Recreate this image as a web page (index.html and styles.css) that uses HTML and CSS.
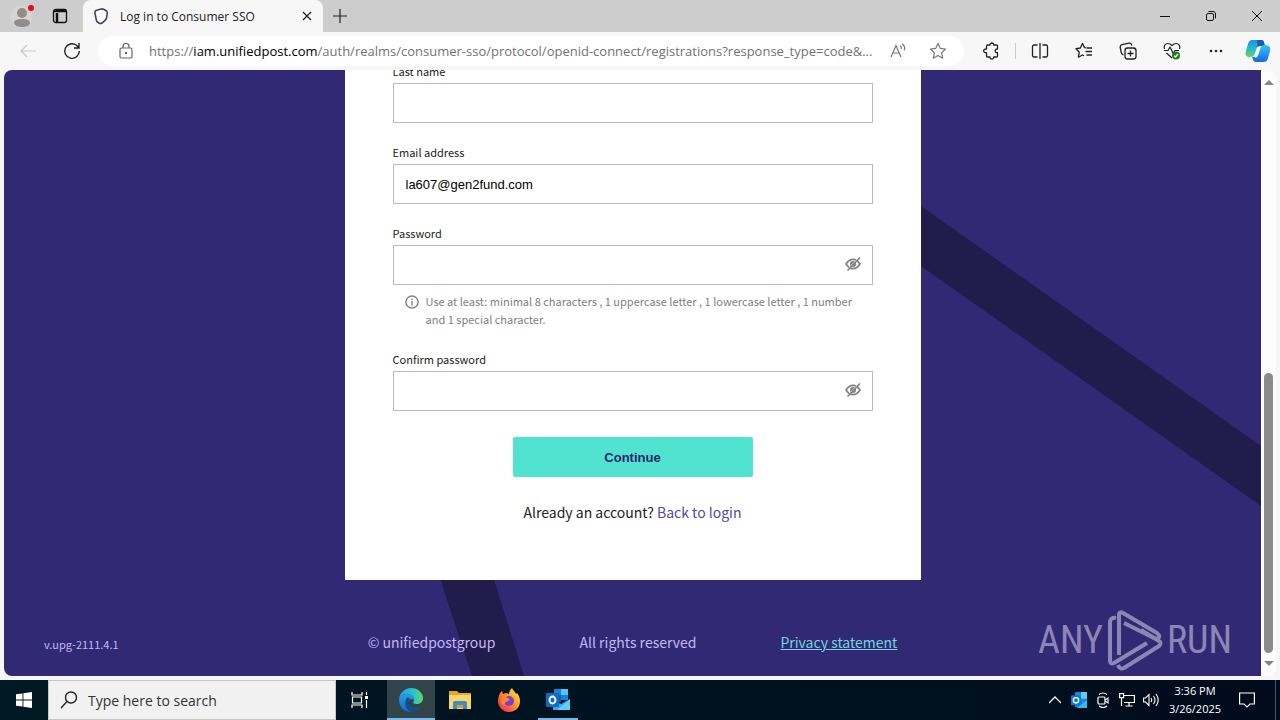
FILE: index.html
```
<!DOCTYPE html>
<html lang="en">
	<head>
		<title>Log in to Consumer SSO</title>
		<meta charset="utf-8" />
		<meta name="viewport" content="width=device-width, initial-scale=1" />
		<link rel="stylesheet" href="styles.css">
	</head>
	<body>
		<header class="tabstrip">
			<button class="profile" aria-label="Profile">
				<svg width="24" height="24" viewBox="0 0 24 24">
					<circle cx="11" cy="13" r="11" fill="#d6d3d1"/>
					<circle cx="12" cy="9" r="5" fill="#918d8b"/>
					<path d="M4 19c0-3 3-4 8-4s8 1 8 4c-1 3-4 4-8 4s-7-1-8-4z" fill="#918d8b"/>
					<circle cx="21" cy="4" r="3" fill="#e00b1c"/>
				</svg>
			</button>
			<button class="tab-actions" aria-label="Tab actions">
				<svg width="16" height="16" viewBox="0 0 16 16" fill="none" stroke="#111" stroke-width="1.3">
					<rect x="1.5" y="1.5" width="13" height="13" rx="2"/>
					<path d="M2 3h12M5 5v9" stroke-width="2.5"/>
				</svg>
			</button>
			<div class="tab">
				<svg width="16" height="18" viewBox="0 0 16 18" fill="#fff" stroke="#443e72" stroke-width="1.6">
					<path d="M3 3.500L8 2c1-.5 2 0 3 .5l2.500 1.500c.5.5.8 1 .7 2L13.500 11c-.2 1-.5 1.500-1.500 2.300L9 16c-1 .6-2 .6-3 0l-1.500-1c-.7-.5-1-1-1.200-2L2 6c-.3-1.200 0-2 1-2.500z"/>
				</svg>
				<span class="tab-title">Log in to Consumer SSO</span>
				<button class="tab-close" aria-label="Close tab">
					<svg width="10" height="10" viewBox="0 0 10 10" stroke="#222" stroke-width="1.3"><path d="M1 1l8 8M9 1l-8 8"/></svg>
				</button>
			</div>
			<button class="new-tab" aria-label="New tab">
				<svg width="14" height="14" viewBox="0 0 14 14" stroke="#222" stroke-width="1.2"><path d="M7 0v14M0 7h14"/></svg>
			</button>
			<div class="window-controls">
				<button aria-label="Minimize"><svg width="10" height="10" viewBox="0 0 10 10" stroke="#111"><path d="M0 5.500h10"/></svg></button>
				<button aria-label="Restore"><svg width="10" height="10" viewBox="0 0 10 10" fill="none" stroke="#111"><rect x=".5" y="2.500" width="7" height="7" rx="1.500"/><path d="M2.500.5H7c1.500 0 2.500 1 2.500 2.500v4.500"/></svg></button>
				<button aria-label="Close"><svg width="10" height="10" viewBox="0 0 10 10" stroke="#111"><path d="M0 0l10 10M10 0L0 10"/></svg></button>
			</div>
		</header>

		<nav class="toolbar">
			<button class="tool" aria-label="Back"><svg width="16" height="14" viewBox="0 0 16 14" fill="none" stroke="#c8c8c8" stroke-width="1.200"><path d="M7 1L1 7l6 6M1 7h15"/></svg></button>
			<button class="tool" aria-label="Refresh"><svg width="18" height="18" viewBox="0 0 18 18" fill="none" stroke="#222" stroke-width="1.400"><path d="M16.300 9A7.300 7.300 0 1 1 13.500 3.300L16 6M16 1v5h-5"/></svg></button>
			<div class="address">
				<svg width="14" height="16" viewBox="0 0 14 16" fill="none" stroke="#666" stroke-width="1.200"><rect x="1" y="5" width="12" height="10" rx="1.500"/><path d="M4 5V3.500a3 3 0 0 1 6 0V5"/><circle cx="7" cy="10" r=".6" fill="#666"/></svg>
				<div class="url" role="textbox" aria-label="Address" contenteditable="true">https://<b>iam.unifiedpost.com</b>/auth/realms/consumer-sso/protocol/openid-connect/registrations?response_type=code&amp;...</div>
				<button class="in-address" aria-label="Read aloud"><svg width="18" height="16" viewBox="0 0 18 16" fill="none" stroke="#777" stroke-width="1.200"><path d="M2 14L7 2.500 12 14M4 10h6M11 2.500c1.200.8 1.600 2 1.200 3.500M13 .8c2.300 1.500 3 4 2.400 6.500"/></svg></button>
				<button class="in-address" aria-label="Add to favorites"><svg width="18" height="18" viewBox="0 0 18 18" fill="none" stroke="#777" stroke-width="1.200" stroke-linejoin="round"><path d="M9 1.500l2.300 4.900 5.200.7-3.800 3.700.9 5.400L9 13.600l-4.600 2.600.9-5.400L1.500 7.100l5.200-.7z"/></svg></button>
			</div>
			<button class="tool" aria-label="Extensions"><svg width="18" height="18" viewBox="0 0 18 18" fill="none" stroke="#222" stroke-width="1.300" stroke-linejoin="round"><path d="M5.500 3H8c-.3-2.700 4-2.700 3.700 0h2.800q1 0 1 1v3c-3-.3-3.300 4 0 3.700V14q0 1-1 1h-2.800c.3 2.700-4 2.700-3.700 0H5.500q-1 0-1-1v-3.300c-3.800.3-3.800-4 0-3.700V4q0-1 1-1z"/></svg></button>
			<span class="separator"></span>
			<button class="tool" aria-label="Split screen"><svg width="18" height="16" viewBox="0 0 18 16" fill="none" stroke="#222" stroke-width="1.300"><path d="M9 0v16M6.500 2H3a1.500 1.500 0 0 0-1.500 1.500v9A1.500 1.500 0 0 0 3 14h3.500M11.500 2H15a1.500 1.500 0 0 1 1.500 1.500v9A1.500 1.500 0 0 1 15 14h-3.500"/></svg></button>
			<button class="tool" aria-label="Favorites"><svg width="18" height="18" viewBox="0 0 18 18" fill="none" stroke="#222" stroke-width="1.300" stroke-linejoin="round"><path d="M11 5.800l-1.400-.2L7.500 1.500 5.400 6 1 6.700l3.300 3.500-.9 5L7.500 13l1.500.8M11.500 6H17M10.500 9.500H17M11.500 13H17"/></svg></button>
			<button class="tool" aria-label="Collections"><svg width="18" height="18" viewBox="0 0 18 18" fill="none" stroke="#222" stroke-width="1.300"><rect x="6" y="6" width="11" height="11" rx="2.500"/><path d="M11.500 8.500v6M8.500 11.500h6M4.500 13C3 12.500 2.500 12 2.200 10.500l-1-5C1 4 1.500 3 3 2.600L10 1.200c1.500-.3 2.500.5 3 2.300"/></svg></button>
			<button class="tool" aria-label="Browser essentials"><svg width="18" height="18" viewBox="0 0 18 18" fill="none" stroke="#222" stroke-width="1.200" stroke-linejoin="round"><path d="M1.500 7C.5 4 2 1.500 5 1.500c2 0 3 1 4 2 1-1 2-2 4-2 3 0 4.500 2.500 3.500 5.500M1 8.500h4L7 5l3 6 2-2.500h4M3.500 11L9 16"/><circle cx="13" cy="13.500" r="4" fill="#16811b" stroke="none"/><path d="M11 13.700l1.500 1.300 2.500-3" stroke="#fff"/></svg></button>
			<button class="tool" aria-label="Settings and more"><svg width="16" height="4" viewBox="0 0 16 4" fill="#222"><circle cx="3" cy="2" r="1.300"/><circle cx="8" cy="2" r="1.300"/><circle cx="13" cy="2" r="1.300"/></svg></button>
			<button class="tool copilot" aria-label="Copilot">
				<svg width="26" height="24" viewBox="0 0 26 24">
					<defs>
						<linearGradient id="cp-left" x2="0" y2="1"><stop offset="0" stop-color="#1b8fe0"/><stop offset=".5" stop-color="#27b8cf"/><stop offset="1" stop-color="#5fd56a"/></linearGradient>
						<linearGradient id="cp-right" x2="0" y2="1"><stop offset="0" stop-color="#35c6f4"/><stop offset="1" stop-color="#1468e8"/></linearGradient>
					</defs>
					<path d="M7 1h9c3 0 3 3 4 6h-5c-2 0-3 1-3.500 3L10 14c-1 3-2 4-5 4-4 0-5-2-4-6l2-7c1-3 2-4 4-4z" fill="url(#cp-left)"/>
					<path d="M12 1h5c2 0 2 3 3 6h-5c-1 0-2 .5-2.500 1.500z" fill="#1360b8"/>
					<path d="M20 6c4 0 6 2 5 6l-2 7c-1 3-2 4-5 4h-7c-3 0-3-3-4-5h3c2 0 3-1 3.500-3l2-6c.5-2 2-3 4.500-3z" fill="url(#cp-right)"/>
					<path d="M12 9h3l-2.500 8c-.3 1-1 1.500-2.500 1.500z" fill="#eaf7ff"/>
				</svg>
			</button>
		</nav>

		<main class="viewport">
			<div class="page">
				<svg class="stripes" viewBox="0 0 1257 606" preserveAspectRatio="none" fill="#211c4c" aria-hidden="true">
					<path d="M900 124L1257 376V436L900 184z"/>
					<path d="M430 490h54l36 116h-52z"/>
				</svg>
				<form class="card">
					<div class="field">
						<label for="last-name">Last name</label>
						<input type="text" id="last-name">
					</div>
					<div class="field">
						<label for="email">Email address</label>
						<input type="text" id="email" value="la607@gen2fund.com">
					</div>
					<div class="field">
						<label for="password">Password</label>
						<div class="secret">
							<input type="password" id="password">
							<button type="button" class="reveal" aria-label="Show password">
								<svg width="18" height="16" viewBox="0 0 18 16" fill="none" stroke="#808080" stroke-width="1.600"><path d="M2 8q3-4.600 7-4.600T16 8q-3 4.600-7 4.600T2 8z"/><circle cx="9" cy="8" r="2.200" fill="#808080"/><path d="M2.500 15L15 2" stroke="#fff" /><path d="M3.500 14.500L16 1.500"/></svg>
							</button>
						</div>
						<div class="hint">
							<svg width="14" height="14" viewBox="0 0 14 14" fill="none" stroke="#888" stroke-width="1.500"><circle cx="7" cy="7" r="6.100"/><path d="M7 6v4.500M7 3.500V5"/></svg>
							<span>Use at least: minimal 8 characters , 1 uppercase letter , 1 lowercase letter , 1 number and 1 special character.</span>
						</div>
					</div>
					<div class="field">
						<label for="confirm">Confirm password</label>
						<div class="secret">
							<input type="password" id="confirm">
							<button type="button" class="reveal" aria-label="Show password">
								<svg width="18" height="16" viewBox="0 0 18 16" fill="none" stroke="#808080" stroke-width="1.600"><path d="M2 8q3-4.600 7-4.600T16 8q-3 4.600-7 4.600T2 8z"/><circle cx="9" cy="8" r="2.200" fill="#808080"/><path d="M2.500 15L15 2" stroke="#fff" /><path d="M3.500 14.500L16 1.500"/></svg>
							</button>
						</div>
					</div>
					<button type="submit" class="continue">Continue</button>
					<p class="account">Already an account? <a href="#login">Back to login</a></p>
				</form>
				<footer class="footer">
					<span>© unifiedpostgroup</span>
					<span>All rights reserved</span>
					<a href="#privacy">Privacy statement</a>
				</footer>
				<span class="version">v.upg-2111.4.1</span>
				<div class="watermark">
					<span>ANY</span>
					<svg width="56" height="62" viewBox="0 0 56 62" fill="none" stroke="currentColor" stroke-width="4" stroke-linejoin="round">
						<path d="M9 9Q3 8 3 14v37q0 5 4 3l33-20"/>
						<path d="M12 46V6q0-4 4-2l34 20q4 3 1 5-2 1-4 0L17 14"/>
						<path d="M11 56q2 5 6 3l35-22q3-3 0-5L34 21"/>
					</svg>
					<span>RUN</span>
				</div>
			</div>
			<div class="scrollbar">
				<svg width="10" height="5" viewBox="0 0 10 5" fill="#858585"><path d="M5 0l5 5H0z"/></svg>
				<div class="track"><div class="thumb"></div></div>
				<svg width="10" height="5" viewBox="0 0 10 5" fill="#858585"><path d="M0 0h10L5 5z"/></svg>
			</div>
		</main>

		<footer class="taskbar">
			<button class="task" aria-label="Start"><svg width="16" height="16" viewBox="0 0 16 16" fill="#fff"><path d="M0 2.300L6.500 1.400v6.200H0zM7.400 1.200L16 0v7.600H7.400zM0 8.400h6.500v6.200L0 13.700zM7.400 8.400H16V16l-8.600-1.200z"/></svg></button>
			<label class="search">
				<svg width="18" height="18" viewBox="0 0 18 18" fill="none" stroke="#222" stroke-width="1.400"><circle cx="11" cy="6.500" r="5.500"/><path d="M7 10.500L1 17"/></svg>
				<input type="text" placeholder="Type here to search" aria-label="Search">
			</label>
			<button class="task" aria-label="Task view"><svg width="18" height="16" viewBox="0 0 18 16" fill="none" stroke="#fff" stroke-width="1.200"><path d="M1 0v3h10V0M1 16v-3h10v3M1.500 5h9v6h-9zM15.500 0v3M15.500 8v8"/><path d="M14 4h3v3h-3z" fill="#fff" stroke="none"/></svg></button>
			<div class="apps">
				<button class="task running active" aria-label="Edge">
					<svg width="24" height="24" viewBox="0 0 24 24">
						<defs>
							<linearGradient id="edge-top"><stop offset="0" stop-color="#2799de"/><stop offset=".6" stop-color="#2bc4cf"/><stop offset="1" stop-color="#65d85c"/></linearGradient>
							<linearGradient id="edge-low" x2="0" y2="1"><stop offset="0" stop-color="#2aa0e4"/><stop offset="1" stop-color="#1368be"/></linearGradient>
						</defs>
						<path d="M0 11C1 4 6 0 12 0c7 0 12 5 12 10 0 4-3 6-6.500 6-3 0-4-1-3-2.500C17 9 12 6 8 6c-4 0-7 2-8 5z" fill="url(#edge-top)"/>
						<path d="M0 12c0-4 4-6 8-6 5 0 8 3 7 6-1-2-6-1-6 3 0 5 6 7 12 4-3 4-6 5-9 5C5 24 0 19 0 12z" fill="url(#edge-low)"/>
						<path d="M9 9c-4 3-4 12 3 15 4 0 7-2 9-5-6 3-12 1-12-4 0-2 1-3 2-4z" fill="#104e93"/>
					</svg>
				</button>
				<button class="task" aria-label="File Explorer">
					<svg width="22" height="20" viewBox="0 0 22 20"><path d="M0 1h8l2 2h12v15H0z" fill="#e8a52c"/><path d="M0 5h22v14H0z" fill="#fbd569"/><path d="M4 19v-6q0-2 2-2h10q2 0 2 2v6h-4v-4H8v4z" fill="#3e8ec4"/><path d="M8 15h6v3H8z" fill="#d89c33"/></svg>
				</button>
				<button class="task" aria-label="Firefox">
					<svg width="24" height="24" viewBox="0 0 24 24">
						<defs><linearGradient id="fox" x1="1" x2="0" y2="1"><stop offset="0" stop-color="#fff34a"/><stop offset=".45" stop-color="#ff9a26"/><stop offset=".75" stop-color="#ff4b46"/><stop offset="1" stop-color="#e82a70"/></linearGradient></defs>
						<path d="M3 5l2-2 1 3 3-1 3 1c0-3 2-5 3-6 1 3 3 3 4 6l1-1c2 3 3 5 3 8 0 7-5 11-11 11S1 19 1 13c0-3 1-6 2-8z" fill="url(#fox)"/>
						<circle cx="12" cy="13" r="5" fill="#7b3ed2"/>
						<path d="M6 8l5 2 2 2-4 2c-2 1-2 3 0 4-3 0-5-3-5-5z" fill="#ff8a27"/>
					</svg>
				</button>
				<button class="task running" aria-label="Outlook">
					<svg width="24" height="24" viewBox="0 0 24 24"><path d="M8 1h14v11H8z" fill="#1584d8"/><path d="M15 1h7v6h-7z" fill="#4fc5f5"/><path d="M8 7h7v7H8z" fill="#0d5fae"/><path d="M7 12l8 4 9-5v11H7z" fill="#35a9ea"/><path d="M24 11v11H11z" fill="#5fcff7"/><rect y="5" width="13" height="14" rx="1" fill="#0f6cc0"/><ellipse cx="6.500" cy="12" rx="3" ry="3.500" fill="none" stroke="#fff" stroke-width="1.800"/></svg>
				</button>
			</div>
			<div class="tray">
				<button aria-label="Show hidden icons"><svg width="12" height="8" viewBox="0 0 12 8" fill="none" stroke="#fff" stroke-width="1.300"><path d="M0 7l6-6 6 6"/></svg></button>
				<button aria-label="Outlook"><svg width="16" height="16" viewBox="0 0 24 24"><path d="M6 0h18v23H6z" fill="#168bdc"/><path d="M15 0h9v10h-9z" fill="#5bcdf8"/><path d="M24 12v12H9z" fill="#38b7ef"/><rect y="5" width="15" height="15" rx="1" fill="#0f77cb"/><circle cx="7.500" cy="12.500" r="4" fill="none" stroke="#fff" stroke-width="2"/></svg></button>
				<button aria-label="Meet now"><svg width="14" height="16" viewBox="0 0 14 16" fill="none" stroke="#fff" stroke-width="1.200"><rect x="2" y="5" width="7" height="7" rx="1"/><path d="M9 8l3-2v5L9 9M3 2.500q4-3 8 0M3 14q4 3 8 0"/></svg></button>
				<button aria-label="Network"><svg width="16" height="14" viewBox="0 0 16 14" fill="none" stroke="#fff" stroke-width="1.200"><path d="M5 2.500h10.400v7H5M10 9.500V13M6.500 13h7M.6.600h4v4h-4zM2.500 4.500V13"/></svg></button>
				<button aria-label="Volume"><svg width="16" height="14" viewBox="0 0 16 14" fill="none" stroke="#fff" stroke-width="1.100"><path d="M.6 5h2L6 1.500v11L2.600 9h-2zM8 5q1.500 2 0 4M10.500 3q3 4 0 8M13 1q4.500 6 0 12"/></svg></button>
				<div class="clock"><span>3:36 PM</span><span>3/26/2025</span></div>
				<button class="notifications" aria-label="Notifications"><svg width="16" height="16" viewBox="0 0 16 16" fill="none" stroke="#fff" stroke-width="1.200"><path d="M.6 1h14.800v11h-4.400l-3 3-3-3H.6z"/></svg></button>
			</div>
			<button class="show-desktop" aria-label="Show desktop"></button>
		</footer>
	</body>
</html>
```
FILE: styles.css
```
* {
	box-sizing: border-box;
}
body {
	margin: 0;
	height: 100vh;
	overflow: hidden;
	display: flex;
	flex-direction: column;
	background: #f7f7f7;
	font-family: "Open Sans", "Noto Sans", sans-serif;
	color: #222;
}
button {
	display: flex;
	align-items: center;
	justify-content: center;
	margin: 0;
	padding: 0;
	border: 0;
	background: none;
	flex: none;
}
svg {
	display: block;
	flex: none;
}

/* browser chrome */
.tabstrip {
	display: flex;
	height: 32px;
	flex: none;
	background: #cdcdcd;
}
.profile {
	width: 44px;
}
.tab-actions {
	width: 32px;
}
.tab {
	display: flex;
	align-items: center;
	width: 240px;
	margin-left: 7px;
	padding: 0 8px 0 10px;
	border-radius: 8px 8px 0 0;
	background: #f7f7f7;
}
.tab-title {
	flex: 1;
	margin-left: 11px;
	font-size: 12px;
	white-space: nowrap;
}
.tab-close {
	width: 16px;
	height: 16px;
}
.new-tab {
	width: 34px;
}
.window-controls {
	display: flex;
	margin-left: auto;
}
.window-controls button {
	width: 46px;
}
.toolbar {
	display: flex;
	align-items: center;
	height: 38px;
	flex: none;
	padding: 0 2px 0 6px;
}
.tool {
	width: 44px;
	height: 30px;
}
.copilot {
	width: 40px;
}
.address {
	display: flex;
	align-items: center;
	flex: 1;
	min-width: 0;
	height: 30px;
	margin: 0 5px 0 4px;
	padding: 0 6px 0 21px;
	border-radius: 15px;
	background: #fff;
}
.url {
	flex: 1;
	min-width: 0;
	margin-left: 16px;
	overflow: hidden;
	white-space: nowrap;
	font-size: 13px;
	line-height: 20px;
	color: #737373;
	outline: 0;
}
.url b {
	font-weight: 400;
	color: #000;
}
.in-address {
	width: 40px;
}
.separator {
	width: 1px;
	height: 16px;
	margin: 0 2px;
	background: #ccc;
}

/* web page */
.viewport {
	display: flex;
	flex: 1;
	min-height: 0;
	margin: 0 4px 4px;
	border-radius: 8px;
	overflow: hidden;
	background: #fcfcfc;
}
.page {
	position: relative;
	display: flex;
	flex-direction: column;
	align-items: center;
	justify-content: flex-end;
	flex: 1;
	min-width: 0;
	overflow: hidden;
	background: #322975;
	font-family: "Noto Sans CJK SC", sans-serif;
}
.stripes {
	position: absolute;
	top: 0;
	left: 0;
	width: 100%;
	height: 100%;
}
.card {
	position: relative;
	display: flex;
	flex-direction: column;
	flex: none;
	gap: 21px;
	width: 576px;
	padding: 0 48px 56px;
	background: #fff;
}
.field label {
	display: block;
	margin-bottom: 4px;
	font-size: 11px;
	line-height: 16px;
}
.field input {
	display: block;
	width: 100%;
	height: 40px;
	padding: 0 12px;
	border: 1px solid #bbb;
	border-radius: 0;
	background: #fff;
	font-family: "Liberation Sans", Arial, sans-serif;
	font-size: 13px;
	color: #000;
	outline: 0;
}
.secret {
	position: relative;
}
.reveal {
	position: absolute;
	top: 0;
	right: 0;
	width: 40px;
	height: 38px;
}
.hint {
	display: flex;
	gap: 7px;
	padding: 7px 12px 2px;
	font-size: 11px;
	line-height: 18px;
	color: #808080;
}
.hint svg {
	margin-top: 3px;
}
.continue {
	align-self: center;
	width: 240px;
	height: 40px;
	margin-top: 5px;
	border-radius: 2px;
	background: #4fe3d0;
	font-family: "Liberation Sans", Arial, sans-serif;
	font-size: 13px;
	font-weight: 700;
	color: #28246d;
}
.account {
	margin: 2px 0 0;
	text-align: center;
	font-size: 14px;
	line-height: 24px;
}
.account a {
	color: #5648a5;
	text-decoration: none;
}
.footer {
	position: relative;
	display: flex;
	flex: none;
	gap: 84px;
	padding: 50px 0 22px;
	font-size: 14px;
	line-height: 24px;
	color: #c3b8f2;
}
.footer a {
	color: #72d5dc;
}
.version {
	position: absolute;
	left: 40px;
	bottom: 22px;
	font-size: 11px;
	line-height: 20px;
	color: #c3b8f2;
}
.watermark {
	position: absolute;
	right: 29px;
	bottom: 5px;
	display: flex;
	align-items: center;
	gap: 4px;
	font-family: "Liberation Sans Narrow", "Roboto Condensed", "DejaVu Sans Condensed", sans-serif;
	font-size: 38px;
	line-height: 62px;
	color: #8d86b4;
}
.scrollbar {
	display: flex;
	flex-direction: column;
	align-items: center;
	width: 15px;
	padding: 10px 0;
}
.track {
	display: flex;
	flex: 1;
	align-items: flex-end;
	padding: 8px 0;
}
.thumb {
	width: 9px;
	height: 50%;
	border-radius: 5px;
	background: #8b8b8b;
}

/* desktop taskbar */
.taskbar {
	display: flex;
	height: 40px;
	flex: none;
	background: linear-gradient(90deg, #001923, #000b1c);
}
.task {
	width: 48px;
	height: 40px;
}
.running {
	position: relative;
}
.running::after {
	content: "";
	position: absolute;
	right: 4px;
	bottom: 0;
	left: 4px;
	height: 2px;
	background: #76b9ed;
}
.active {
	background: #30444a;
}
.active::after {
	right: 0;
	left: 0;
}
.search {
	display: flex;
	align-items: center;
	width: 288px;
	padding-left: 11px;
	border: 1px solid #c8c8c0;
	background: #f1f1f1;
}
.search input {
	flex: 1;
	min-width: 0;
	margin-left: 10px;
	padding: 0;
	border: 0;
	background: none;
	font-family: inherit;
	font-size: 14px;
	outline: 0;
}
.search input::placeholder {
	color: #333;
}
.apps {
	display: flex;
	gap: 1px;
	margin-left: 3px;
}
.tray {
	display: flex;
	margin-left: auto;
}
.tray button {
	width: 24px;
}
.clock {
	display: flex;
	flex-direction: column;
	justify-content: center;
	width: 64px;
	text-align: center;
	font-size: 11px;
	line-height: 18px;
	color: #fff;
}
.tray .notifications {
	width: 40px;
}
.show-desktop {
	width: 5px;
	margin-left: 8px;
	border-left: 1px solid #4c5563;
}
```
